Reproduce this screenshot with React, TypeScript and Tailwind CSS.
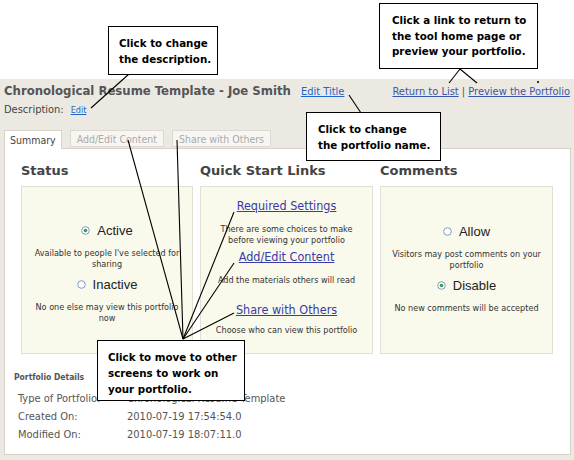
import React from "react";

const verdana = "font-['Tahoma','DejaVu_Sans',sans-serif] font-stretch-condensed";
const bold = "font-['Verdana','DejaVu_Sans',sans-serif]";
const arial = "font-['Liberation_Sans','Arial',sans-serif]";

const Radio = ({ on }: { on?: boolean }) => (
  <svg width="9" height="9" viewBox="0 0 9 9" className="shrink-0">
    <circle cx="4.5" cy="4.5" r="3.8" fill="#fff" stroke="#7f9db9" strokeWidth="1" />
    {on && <circle cx="4.5" cy="4.5" r="1.8" fill="#3c9a5c" />}
  </svg>
);

const Option = ({ label, on, desc }: { label: string; on?: boolean; desc: string }) => (
  <div className="flex flex-col items-center">
    <div className={`flex h-[15px] items-center gap-[7px] ${arial} text-[13px] text-[#222]`}>
      <Radio on={on} />
      <span>{label}</span>
    </div>
    <p className={`${verdana} mt-[10px] px-[10px] text-center text-[9px] leading-[11px] text-[#333]`}>{desc}</p>
  </div>
);

const Callout = ({ className, lines }: { className: string; lines: string[] }) => (
  <div
    className={`absolute whitespace-nowrap border border-black bg-white ${bold} text-[10.3px] font-bold leading-[15.5px] text-black ${className}`}
  >
    {lines.map((l) => (
      <div key={l}>{l}</div>
    ))}
  </div>
);

export default function App() {
  return (
    <div className="relative h-[460px] w-[574px] overflow-hidden bg-white">
      <div className="h-[79px]" />
      <div className="h-[381px] bg-[#ece9e3] px-[4px] pt-[4px]">
        <div className="flex h-[16px] items-baseline whitespace-nowrap">
          <h1 className={`${verdana} text-[13px] font-bold leading-[16px] text-[#555]`}>
            Chronological Resume Template - Joe Smith
          </h1>
          <a className={`${verdana} ml-[10px] text-[11px] text-[#2266cc] underline`}>Edit Title</a>
          <div className={`${verdana} ml-auto text-[11px] text-[#3a55a8]`}>
            <a className="underline">Return to List</a>
            <span className="text-[#555]"> | </span>
            <a className="underline">Preview the Portfolio</a>
          </div>
        </div>
        <div className={`${verdana} mt-[4px] flex h-[13px] items-baseline text-[11px] leading-[13px] text-[#444]`}>
          <span>Description:</span>
          <a className="ml-[7px] text-[9px] text-[#2266cc] underline">Edit</a>
        </div>
        <div className={`${verdana} mt-[14px] flex items-end gap-[8px] text-[10.5px]`}>
          <div className="relative z-10 -mb-px h-[19px] border border-b-0 border-[#d6d2ca] bg-white px-[5px] pt-[2px] leading-[14px] text-[#444]">
            Summary
          </div>
          <div className="mb-[1px] h-[17px] border border-[#dcd9d2] bg-[#f7f6f2] px-[6px] pt-[1px] leading-[14px] text-[#aaa]">
            Add/Edit Content
          </div>
          <div className="mb-[1px] h-[17px] border border-[#dcd9d2] bg-[#f7f6f2] px-[6px] pt-[1px] leading-[14px] text-[#aaa]">
            Share with Others
          </div>
        </div>
        <div className="h-[307px] w-[567px] border border-[#d6d2ca] bg-white px-[16px] pt-[13px]">
          <div className="grid grid-cols-[172px_173px_173px] gap-x-[7px] gap-y-[7px]">
            {["Status", "Quick Start Links", "Comments"].map((h) => (
              <h2 key={h} className={`${bold} text-[13px] font-bold leading-[17px] text-[#444]`}>
                {h}
              </h2>
            ))}
            <div className="h-[168px] border border-[#e2e0d4] bg-[#f9f9ec] pt-[36px]">
              <Option on label="Active" desc="Available to people I've selected for sharing" />
              <div className="mt-[7px]">
                <Option label="Inactive" desc="No one else may view this portfolio now" />
              </div>
            </div>
            <div className={`${verdana} h-[168px] border border-[#e2e0d4] bg-[#f9f9ec] pt-[11px] text-center`}>
              <a className="block text-[12.5px] leading-[16px] text-[#3a3aa8] underline">Required Settings</a>
              <p className="mt-[10px] px-[18px] text-[9px] leading-[10.5px] text-[#333]">
                There are some choices to make before viewing your portfolio
              </p>
              <a className="mt-[4px] block text-[12.5px] leading-[16px] text-[#3a3aa8] underline">Add/Edit Content</a>
              <p className="mt-[10px] text-[9px] leading-[11px] text-[#333]">Add the materials others will read</p>
              <a className="mt-[16px] block text-[12.5px] leading-[16px] text-[#3a3aa8] underline">Share with Others</a>
              <p className="mt-[7px] text-[9px] leading-[11px] text-[#333]">Choose who can view this portfolio</p>
            </div>
            <div className="h-[168px] border border-[#e2e0d4] bg-[#f9f9ec] pt-[37px]">
              <Option label="Allow" desc="Visitors may post comments on your portfolio" />
              <div className="mt-[7px]">
                <Option on label="Disable" desc="No new comments will be accepted" />
              </div>
            </div>
          </div>
          <div className={`${verdana} -ml-[7px] mt-[18px] text-[#555]`}>
            <div className={`${bold} text-[8.5px] font-bold leading-[11px]`}>Portfolio Details</div>
            <div className="mt-[8px] grid grid-cols-[109px_1fr] gap-y-[3px] pl-[4px] text-[11px] leading-[15px]">
              <span>Type of Portfolio:</span>
              <span>Chronological Resume Template</span>
              <span>Created On:</span>
              <span>2010-07-19 17:54:54.0</span>
              <span>Modified On:</span>
              <span>2010-07-19 18:07:11.0</span>
            </div>
          </div>
        </div>
      </div>

      <svg className="pointer-events-none absolute inset-0" width="574" height="460">
        <g stroke="#000" strokeWidth="1.1" fill="none">
          <line x1="129" y1="74" x2="91" y2="108" />
          <line x1="460" y1="69" x2="449" y2="83" />
          <line x1="460" y1="69" x2="477" y2="83" />
          <line x1="349" y1="95" x2="361" y2="113" />
          <line x1="183" y1="339" x2="128" y2="140" />
          <line x1="183" y1="339" x2="177" y2="140" />
          <line x1="183" y1="339" x2="234" y2="212" />
          <line x1="183" y1="339" x2="234" y2="263" />
          <line x1="183" y1="339" x2="234" y2="313" />
        </g>
        <rect x="537" y="81" width="2" height="2" fill="#333" />
      </svg>

      <Callout className="left-[108px] top-[26px] h-[49px] w-[110px] pl-[10px] pt-[9px]" lines={["Click to change", "the description."]} />
      <Callout
        className="left-[379px] top-[3px] h-[66px] w-[159px] pl-[12px] pt-[9px]"
        lines={["Click a link to return to", "the tool home page or", "preview your portfolio."]}
      />
      <Callout className="left-[306px] top-[112px] h-[49px] w-[135px] pl-[11px] pt-[9px]" lines={["Click to change", "the portfolio name."]} />
      <Callout
        className="left-[97px] top-[340px] h-[61px] w-[148px] pl-[10px] pt-[8px] leading-[16px]"
        lines={["Click to move to other", "screens to work on", "your portfolio."]}
      />
    </div>
  );
}
